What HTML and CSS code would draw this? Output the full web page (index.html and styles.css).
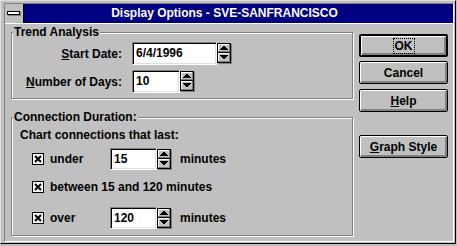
FILE: index.html
```html
<!DOCTYPE html>
<html lang="en">

<head>
    <meta charset="utf-8">
    <meta name="viewport" content="width=device-width, initial-scale=1.0">
    <title>Display Options</title>

    <link rel="stylesheet" href="styles.css">

</head>

<body>

    <div class="window">
        <div class="frame">
            <header class="titlebar">
                <div class="sysmenu">
                    <svg width="14" height="5" viewBox="0 0 14 5" shape-rendering="crispEdges">
                        <rect x="0" y="0" width="13" height="4" fill="#000" />
                        <rect x="1" y="1" width="11" height="2" fill="#fff" />
                        <rect x="1" y="4" width="13" height="1" fill="#808080" />
                        <rect x="13" y="1" width="1" height="4" fill="#808080" />
                    </svg>
                </div>
                <div class="title">Display Options - SVE-SANFRANCISCO</div>
            </header>

            <main class="client">
                <div class="groups">
                    <fieldset class="group trend">
                        <legend>Trend Analysis</legend>
                        <div class="field-grid">
                            <label><u>S</u>tart Date:</label>
                            <div class="spin-field">
                                <span class="edit date">6/4/1996</span>
                                <svg class="spinner" width="15" height="21" viewBox="0 0 15 21" shape-rendering="crispEdges">
                                    <use href="#spin" />
                                </svg>
                            </div>
                            <label><u>N</u>umber of Days:</label>
                            <div class="spin-field">
                                <span class="edit days">10</span>
                                <svg class="spinner" width="15" height="21" viewBox="0 0 15 21" shape-rendering="crispEdges">
                                    <use href="#spin" />
                                </svg>
                            </div>
                        </div>
                    </fieldset>

                    <fieldset class="group duration">
                        <legend>Connection Duration:</legend>
                        <div class="duration-body">
                            <p class="intro">Chart connections that last:</p>

                            <div class="opt-row first">
                                <svg class="check" width="12" height="12" viewBox="0 0 12 12"><use href="#checked" /></svg>
                                <span class="opt-label">under</span>
                                <div class="spin-field">
                                    <span class="edit num">15</span>
                                    <svg class="spinner" width="15" height="21" viewBox="0 0 15 21" shape-rendering="crispEdges">
                                        <use href="#spin" />
                                    </svg>
                                </div>
                                <span class="unit">minutes</span>
                            </div>

                            <div class="opt-row middle">
                                <svg class="check" width="12" height="12" viewBox="0 0 12 12"><use href="#checked" /></svg>
                                <span>between 15 and 120 minutes</span>
                            </div>

                            <div class="opt-row last">
                                <svg class="check" width="12" height="12" viewBox="0 0 12 12"><use href="#checked" /></svg>
                                <span class="opt-label">over</span>
                                <div class="spin-field">
                                    <span class="edit num">120</span>
                                    <svg class="spinner" width="15" height="21" viewBox="0 0 15 21" shape-rendering="crispEdges">
                                        <use href="#spin" />
                                    </svg>
                                </div>
                                <span class="unit">minutes</span>
                            </div>
                        </div>
                    </fieldset>
                </div>

                <div class="buttons">
                    <button class="btn default"><span class="focus">OK</span></button>
                    <button class="btn cancel">Cancel</button>
                    <button class="btn help"><u>H</u>elp</button>
                    <button class="btn graph"><u>G</u>raph Style</button>
                </div>
            </main>
        </div>
    </div>

    <!-- shared shapes for spinners and check boxes -->
    <svg class="defs" width="0" height="0">
        <defs>
            <g id="spin">
                <rect x="0" y="0" width="14" height="20" fill="#000" />
                <rect x="1" y="1" width="12" height="8" fill="#c0c0c0" />
                <rect x="1" y="1" width="11" height="1" fill="#fff" />
                <rect x="1" y="1" width="1" height="7" fill="#fff" />
                <rect x="12" y="1" width="1" height="8" fill="#808080" />
                <rect x="1" y="8" width="12" height="1" fill="#808080" />
                <rect x="1" y="10" width="12" height="9" fill="#c0c0c0" />
                <rect x="1" y="10" width="11" height="1" fill="#fff" />
                <rect x="1" y="10" width="1" height="8" fill="#fff" />
                <rect x="12" y="10" width="1" height="9" fill="#808080" />
                <rect x="1" y="18" width="12" height="1" fill="#808080" />
                <polygon points="7,2 2.5,7 11.5,7" fill="#000" />
                <polygon points="2.5,12 11.5,12 7,17" fill="#000" />
                <rect x="14" y="1" width="1" height="20" fill="#808080" />
                <rect x="1" y="20" width="14" height="1" fill="#808080" />
            </g>
            <g id="checked">
                <rect x="0" y="0" width="12" height="12" fill="#000" />
                <rect x="1" y="1" width="10" height="10" fill="#fff" />
                <path d="M3 3 L9 9 M9 3 L3 9" stroke="#000" stroke-width="2" />
            </g>
        </defs>
    </svg>

</body>

</html>
```

FILE: styles.css
```css
body {
    margin: 0;
    background-color: #c0c0c0;
    font: bold 12px/14px "Liberation Sans", Arial, sans-serif;
    color: #000;
}

.window {
    width: 456px;
    height: 244px;
    box-sizing: border-box;
    border: 1px solid;
    border-color: #dfdfdf #000 #000 #dfdfdf;
    padding: 2px 1px 1px 3px;
}

.frame {
    height: 100%;
    box-sizing: border-box;
    border: 1px solid;
    border-color: #808080 #fff #fff #808080;
    display: flex;
    flex-direction: column;
}

.titlebar {
    display: flex;
    height: 19px;
    border-bottom: 1px solid #fff;
}

.sysmenu {
    width: 18px;
    border-right: 1px solid #000;
    display: flex;
    align-items: center;
    justify-content: center;
}

.title {
    flex: 1;
    background-color: #000080;
    color: #fff;
    text-align: center;
    line-height: 19px;
    padding-right: 28px;
}

.client {
    flex: 1;
    display: flex;
    padding: 1px 0 0 6px;
}

.groups {
    width: 342px;
    display: flex;
    flex-direction: column;
}

.group {
    margin: 0;
    padding: 0 2px;
    min-width: 0;
    border: 1px solid #808080;
    box-shadow: 1px 1px 0 #fff, inset 1px 1px 0 #fff;
}

.group legend {
    padding: 0 1px;
    margin-left: -1px;
    background-color: #c0c0c0;
}

.duration {
    margin-top: 11px;
}

.field-grid {
    display: grid;
    grid-template-columns: 102px auto;
    column-gap: 10px;
    row-gap: 5px;
    align-items: center;
    padding: 3px 0 5px 6px;
}

.field-grid label {
    text-align: right;
}

.spin-field {
    display: flex;
    align-items: center;
}

.edit {
    display: block;
    box-sizing: border-box;
    height: 23px;
    line-height: 21px;
    padding: 0 3px;
    background-color: #fff;
    border: 1px solid;
    border-color: #808080 #fff #fff #808080;
    box-shadow: inset 1px 1px 0 #000, inset -1px -1px 0 #dfdfdf;
}

.date {
    width: 85px;
}

.days {
    width: 48px;
}

.num {
    width: 47px;
    height: 22px;
    line-height: 20px;
}

.duration-body {
    padding: 4px 0 6px 6px;
}

.intro {
    margin: 0;
}

.opt-row {
    display: flex;
    align-items: center;
    height: 22px;
    padding-left: 12px;
}

.opt-row.first,
.opt-row.middle {
    margin-top: 6px;
}

.opt-row.last {
    margin-top: 9px;
}

.check {
    margin-right: 6px;
}

.opt-label {
    width: 60px;
}

.unit {
    margin-left: 8px;
}

.buttons {
    width: 89px;
    margin-left: 6px;
    padding-top: 9px;
    display: flex;
    flex-direction: column;
}

.btn {
    height: 23px;
    box-sizing: border-box;
    padding: 0;
    border: 1px solid #000;
    border-radius: 2px;
    background-color: #c0c0c0;
    box-shadow: inset 1px 1px 0 #fff, inset -2px -2px 0 #808080;
    font: inherit;
    color: #000;
    display: flex;
    align-items: center;
    justify-content: center;
}

.btn.default {
    border-width: 2px;
}

.focus {
    border: 1px dotted #000;
    padding: 0 1px;
}

.cancel {
    margin-top: 4px;
}

.help {
    margin-top: 5px;
}

.graph {
    margin-top: 23px;
}

.defs {
    position: absolute;
}
```
